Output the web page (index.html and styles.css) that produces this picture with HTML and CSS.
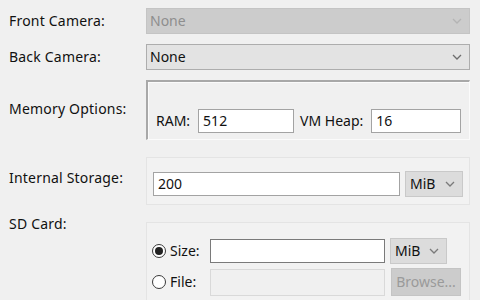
FILE: index.html
```html
<!DOCTYPE html>
<html>
<head>
<meta charset="utf-8">
<link rel="stylesheet" href="styles.css">
</head>
<body>
<div class="form">
  <div class="lbl">Front Camera:</div>
  <div class="select disabled"><span>None</span><svg class="chev" width="10" height="6" viewBox="0 0 10 6"><path d="M1 1 L5 5 L9 1" fill="none" stroke="#b4b4b4" stroke-width="1.3"/></svg></div>

  <div class="lbl">Back Camera:</div>
  <div class="select"><span>None</span><svg class="chev" width="10" height="6" viewBox="0 0 10 6"><path d="M1 1 L5 5 L9 1" fill="none" stroke="#6d6d6d" stroke-width="1.3"/></svg></div>

  <div class="lbl top mem-lbl">Memory Options:</div>
  <div class="group">
    <span class="in-lbl">RAM:</span><div class="input ram">512</div>
    <span class="in-lbl vm">VM Heap:</span><div class="input heap">16</div>
  </div>

  <div class="lbl top int-lbl">Internal Storage:</div>
  <div class="panel int">
    <div class="input storage">200</div>
    <div class="select unit"><span>MiB</span><svg class="chev" width="10" height="6" viewBox="0 0 10 6"><path d="M1 1 L5 5 L9 1" fill="none" stroke="#7a7a7a" stroke-width="1.3"/></svg></div>
  </div>

  <div class="lbl top sd-lbl">SD Card:</div>
  <div class="panel sd">
    <label class="radio"><span class="dot on"></span>Size:</label>
    <div class="input size"></div>
    <div class="select unit small"><span>MiB</span><svg class="chev" width="10" height="6" viewBox="0 0 10 6"><path d="M1 1 L5 5 L9 1" fill="none" stroke="#7a7a7a" stroke-width="1.3"/></svg></div>
    <label class="radio"><span class="dot"></span>File:</label>
    <div class="input file"></div>
    <div class="btn">Browse...</div>
  </div>
</div>
</body>
</html>
```

FILE: styles.css
```css
html, body {
  margin: 0;
  padding: 0;
  background: #f0f0f0;
  font-family: "Noto Sans", "Open Sans", sans-serif;
  font-size: 14px;
  color: #111;
  overflow: hidden;
}
.form {
  display: grid;
  grid-template-columns: 137px 324px;
  padding: 8px 0 0 9px;
  row-gap: 10px;
}
.lbl {
  line-height: 20px;
  align-self: center;
  white-space: nowrap;
  letter-spacing: 0.2px;
}
.lbl.top { align-self: start; }
.mem-lbl { padding-top: 19px; }
.int-lbl { padding-top: 18px; }
.sd-lbl { margin-top: -1px; }

.select {
  height: 26px;
  box-sizing: border-box;
  border: 1px solid #adadad;
  background: #e3e3e3;
  display: flex;
  align-items: center;
  justify-content: space-between;
  padding: 0 7px 0 3px;
  line-height: 20px;
}
.select.disabled {
  background: #cccccc;
  border-color: #c4c4c4;
  color: #8e8e8e;
}
.chev { display: block; }

.group {
  height: 60px;
  box-sizing: border-box;
  border-style: solid;
  border-width: 2px 1px 1px 2px;
  border-color: #a8a8a8 #fbfbfb #fbfbfb #a8a8a8;
  box-shadow: inset 1px 1px 0 #fbfbfb;
  display: flex;
  align-items: center;
  padding: 20px 0 0 8px;
}
.in-lbl { line-height: 20px; }
.in-lbl.vm { margin-left: 6px; }
.input {
  height: 24px;
  box-sizing: border-box;
  background: #fff;
  border: 1px solid #a3a3a3;
  line-height: 22px;
  padding-left: 4px;
}
.ram { width: 96px; margin-left: 8px; }
.heap { width: 90px; margin-left: 8px; }

.panel {
  box-sizing: border-box;
  background: #f2f2f2;
  border: 1px solid #e4e4e4;
}
.int {
  margin-top: 7px;
  height: 48px;
  display: flex;
  align-items: center;
  padding: 6px 0 0 6px;
}
.storage { width: 247px; }
.unit {
  width: 58px;
  margin-left: 5px;
  background: #dcdcdc;
  border-color: #c9c9c9;
  padding-left: 4px;
}
.sd {
  margin-top: 7px;
  height: 90px;
  display: grid;
  grid-template-columns: 58px 175px auto;
  grid-auto-rows: 26px;
  row-gap: 5px;
  align-items: center;
  padding: 15px 0 0 5px;
}
.radio {
  display: flex;
  align-items: center;
  line-height: 20px;
}
.dot {
  width: 14px;
  height: 14px;
  box-sizing: border-box;
  border: 1px solid #3a3a3a;
  border-radius: 50%;
  background: #fff;
  margin-right: 4px;
  position: relative;
}
.dot.on::after {
  content: "";
  position: absolute;
  left: 2px;
  top: 2px;
  width: 8px;
  height: 8px;
  border-radius: 50%;
  background: #222;
}
.size { border-color: #7a7a7a; }
.small { width: 57px; }
.file {
  height: 27px;
  background: #f0f0f0;
  border-color: #d9d9d9;
}
.btn {
  width: 70px;
  height: 28px;
  box-sizing: border-box;
  margin-left: 6px;
  background: #cccccc;
  border: 1px solid #c4c4c4;
  color: #9a9a9a;
  text-align: center;
  line-height: 26px;
}
```
